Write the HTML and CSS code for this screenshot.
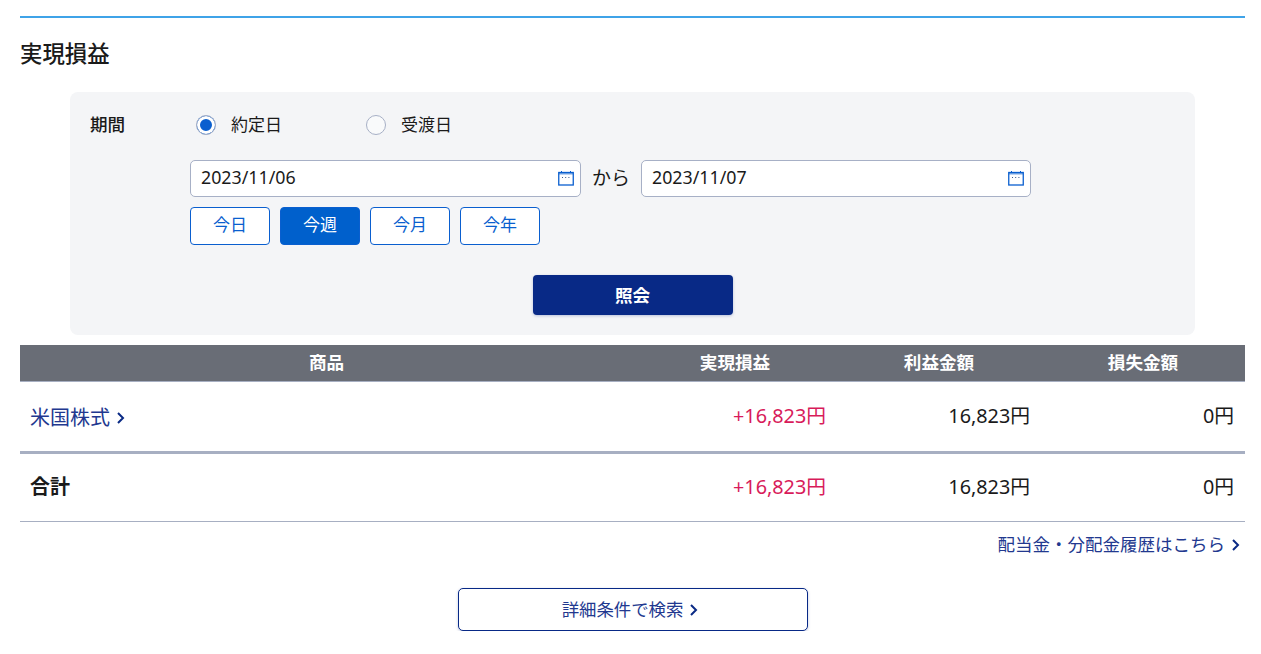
FILE: index.html
```html
<!DOCTYPE html>
<html lang="ja">
<head>
<meta charset="utf-8">
<title>実現損益</title>
<link rel="stylesheet" href="styles.css">
</head>
<body>
<main class="page">
  <h1 class="title">実現損益</h1>
  <section class="panel">
    <div class="period">
      <div class="period-label">期間</div>
      <div class="period-body">
        <div class="radios">
          <label class="radio radio-on"><span class="radio-mark"></span><span class="radio-text">約定日</span></label>
          <label class="radio"><span class="radio-mark"></span><span class="radio-text">受渡日</span></label>
        </div>
        <div class="dates">
          <div class="date-input"><span class="date-text">2023/11/06</span>
            <svg class="cal" viewBox="0 0 16 15" width="16" height="15"><path d="M3.500 0v2M12.500 0v2" stroke="#0a5fcf" fill="none"/><rect x="0.750" y="1.500" width="14.500" height="12.500" fill="#fff" stroke="#0a5fcf" stroke-width="1.300"/><rect x="0.750" y="1.500" width="14.500" height="2" fill="#0a5fcf" opacity=".55"/><path d="M4 6.500h2M7.200 6.500h2M10.400 6.500h2" stroke="#3a5a8c" stroke-dasharray="1 1" fill="none"/></svg>
          </div>
          <span class="from">から</span>
          <div class="date-input"><span class="date-text">2023/11/07</span>
            <svg class="cal" viewBox="0 0 16 15" width="16" height="15"><path d="M3.500 0v2M12.500 0v2" stroke="#0a5fcf" fill="none"/><rect x="0.750" y="1.500" width="14.500" height="12.500" fill="#fff" stroke="#0a5fcf" stroke-width="1.300"/><rect x="0.750" y="1.500" width="14.500" height="2" fill="#0a5fcf" opacity=".55"/><path d="M4 6.500h2M7.200 6.500h2M10.400 6.500h2" stroke="#3a5a8c" stroke-dasharray="1 1" fill="none"/></svg>
          </div>
        </div>
        <div class="quick">
          <button class="quick-btn">今日</button>
          <button class="quick-btn quick-on">今週</button>
          <button class="quick-btn">今月</button>
          <button class="quick-btn">今年</button>
        </div>
      </div>
    </div>
    <div class="submit-row"><button class="submit">照会</button></div>
  </section>

  <div class="table">
    <div class="row head">
      <div class="cell center">商品</div>
      <div class="cell center">実現損益</div>
      <div class="cell center">利益金額</div>
      <div class="cell center">損失金額</div>
    </div>
    <div class="row body-row">
      <div class="cell"><a class="link">米国株式<svg class="chev" viewBox="0 0 8 12" width="8" height="12"><path d="M1 1l5 5-5 5" fill="none" stroke="#0a2a85" stroke-width="2"/></svg></a></div>
      <div class="cell num plus">+16,823円</div>
      <div class="cell num">16,823円</div>
      <div class="cell num">0円</div>
    </div>
    <div class="row total-row">
      <div class="cell strong">合計</div>
      <div class="cell num plus">+16,823円</div>
      <div class="cell num">16,823円</div>
      <div class="cell num">0円</div>
    </div>
  </div>

  <div class="more"><a class="link link-sm">配当金・分配金履歴はこちら<svg class="chev" viewBox="0 0 8 12" width="8" height="12"><path d="M1 1l5 5-5 5" fill="none" stroke="#0a2a85" stroke-width="2"/></svg></a></div>

  <div class="search-row"><button class="search"><span class="search-text">詳細条件で検索</span><svg class="chev" viewBox="0 0 8 12" width="8" height="12"><path d="M1 1l5 5-5 5" fill="none" stroke="#0a2a85" stroke-width="2"/></svg></button></div>
</main>
</body>
</html>
```
FILE: styles.css
```css
* { box-sizing: border-box; }
html, body { margin: 0; background: #fff; }
body {
  font-family: "Noto Sans CJK JP", "Noto Sans", sans-serif;
  color: #1a1a1a;
  font-size: 17px;
}
.page {
  margin: 16px 16px 0 20px;
  border-top: 2px solid #3fa3e8;
}
.title {
  margin: 0;
  padding-top: 18px;
  height: 74px;
  font-size: 22.4px;
  line-height: 32px;
  font-weight: 500;
}
.panel {
  margin: 0 50px;
  height: 243px;
  padding: 20px;
  background: #f4f5f7;
  border-radius: 8px;
}
.period { display: flex; }
.period-label {
  width: 100px;
  font-size: 17.6px;
  font-weight: 500;
  line-height: 24px;
}
.period-body { display: flex; flex-direction: column; }
.radios { display: flex; height: 26px; margin-left: 6px; margin-bottom: 22px; }
.radio { display: flex; align-items: center; gap: 15px; width: 170px; line-height: 26px; }
.radio-text { position: relative; top: -1px; }
.radio-mark {
  width: 20px; height: 20px;
  border-radius: 50%;
  border: 1px solid #a7b0c6;
  background: #f9fafb;
}
.radio-on .radio-mark {
  background: #0a5fcf;
  box-shadow: inset 0 0 0 3px #fff;
}
.dates { display: flex; align-items: center; }
.date-input {
  width: 391px; height: 37px;
  display: flex; align-items: center; justify-content: space-between;
  padding: 0 6px 0 10px;
  background: #fff;
  border: 1px solid #a7b0c6;
  border-radius: 5px;
  font-size: 17.800px;
  font-family: "Noto Sans", sans-serif;
}
.date-text { position: relative; top: -2px; }
.date-input + .from + .date-input { width: 390px; }
.from { width: 60px; text-align: center; font-size: 19px; line-height: 30px; padding-bottom: 3px; }
.cal { display: block; }
.quick { display: flex; gap: 10px; margin-top: 10px; }
.quick-btn {
  width: 80px; height: 38px;
  padding: 0 0 5px;
  font: inherit;
  font-size: 17px;
  color: #0a5fcf;
  background: #fff;
  border: 1px solid #0a5fcf;
  border-radius: 4px;
}
.quick-on { background: #0060cc; color: #fff; }
.submit-row { display: flex; justify-content: center; margin-top: 30px; }
.submit {
  width: 200px; height: 40px;
  padding: 0 0 2px;
  font: inherit;
  font-size: 17.6px;
  font-weight: 700;
  color: #fff;
  background: #082986;
  border: 0;
  border-radius: 4px;
  box-shadow: 0 1px 3px rgba(8,41,134,.25);
}
.table { margin-top: 10px; }
.row { display: grid; grid-template-columns: 613px 204px 204px 204px; align-items: center; }
.head {
  height: 37px;
  background: #696d76;
  border-bottom: 1px solid #a7afc2;
  color: #fff;
  font-size: 17.6px;
  font-weight: 700;
  padding-bottom: 3px;
}
.body-row { height: 69px; }
.total-row {
  box-sizing: content-box;
  height: 67px;
  border-top: 3px solid #a7afc2;
  border-bottom: 1px solid #a7afc2;
}
.cell { padding: 0 11px; }
.center { text-align: center; padding: 0; }
.num {
  text-align: right;
  font-size: 19.800px;
  font-family: "Noto Sans", "Noto Sans CJK JP", sans-serif;
  position: relative;
  top: -2px;
}
.plus { color: #d81b5a; }
.strong { font-weight: 700; font-size: 20px; position: relative; top: -2px; left: -1px; }
.link {
  display: inline-flex; align-items: center; gap: 7px;
  color: #22388f;
  font-size: 20px;
  font-weight: 400;
  position: relative;
  left: -1px;
}
.link .chev { position: relative; top: 1px; }
.link-sm { font-size: 17.5px; left: 0; }
.more { display: flex; justify-content: flex-end; margin-top: 9px; padding-right: 5px; line-height: 26px; }
.search-row { display: flex; justify-content: center; margin-top: 31px; }
.search {
  width: 350px; height: 43px;
  padding: 0 5px 0 0;
  display: flex; align-items: center; justify-content: center; gap: 7px;
  font: inherit;
  font-size: 17.400px;
  color: #22388f;
  background: #fff;
  border: 1px solid #082986;
  border-radius: 5px;
  box-shadow: 0 1px 3px rgba(8,41,134,.25);
}
.search-text { position: relative; top: -1px; }
```
